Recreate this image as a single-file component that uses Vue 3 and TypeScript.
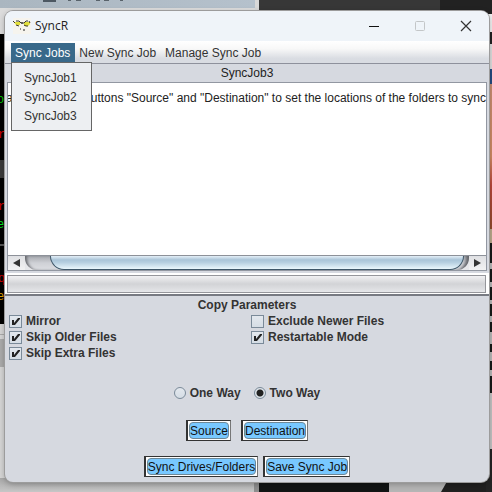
<script setup lang="ts">
import { ref } from 'vue'

interface Option {
  id: string
  label: string
  on: boolean
}

const jobs: string[] = ['SyncJob1', 'SyncJob2', 'SyncJob3']
const currentJob = ref<string>('SyncJob3')
const menuOpen = ref<boolean>(true)
const direction = ref<'one' | 'two'>('two')

const columns = ref<Option[][]>([
  [
    { id: 'mirror', label: 'Mirror', on: true },
    { id: 'older', label: 'Skip Older Files', on: true },
    { id: 'extra', label: 'Skip Extra Files', on: true },
  ],
  [
    { id: 'newer', label: 'Exclude Newer Files', on: false },
    { id: 'restart', label: 'Restartable Mode', on: true },
  ],
])

function pick(job: string): void {
  currentJob.value = job
  menuOpen.value = false
}
</script>

<template>
  <div class="desktop">
    <svg class="backdrop" viewBox="0 0 492 492" preserveAspectRatio="none" aria-hidden="true">
      <defs>
        <linearGradient id="strip" x1="0" x2="1">
          <stop offset="0" stop-color="#aab6c0" />
          <stop offset="1" stop-color="#b5c1cc" />
        </linearGradient>
        <linearGradient id="floor" x1="0" y1="0" x2="0" y2="1">
          <stop offset="0" stop-color="#a9a9a9" />
          <stop offset="1" stop-color="#c6c6c6" />
        </linearGradient>
        <linearGradient id="face" x1="0" y1="0" x2="0" y2="1">
          <stop offset="0" stop-color="#c98d72" />
          <stop offset="0.5" stop-color="#cf8a63" />
          <stop offset="0.7" stop-color="#b9463a" />
          <stop offset="1" stop-color="#8f4a2c" />
        </linearGradient>
      </defs>
      <rect width="492" height="492" fill="#d2d2d2" />
      <rect width="255" height="8" fill="url(#strip)" />
      <rect x="43" width="13" height="2" fill="#4d5862" />
      <path d="M68 0h3M76 0h5M96 0h4M104 0h5M120 0h3" stroke="#59636b" stroke-width="2" />
      <rect y="8" width="260" height="26" fill="#dcdcdc" />
      <rect x="255" width="4" height="12" fill="#d8d8d8" />
      <rect x="259" width="233" height="40" fill="#373737" />
      <rect x="440" width="52" height="40" fill="#222222" />
      <rect y="34" width="8" height="290" fill="#000000" />
      <rect y="160" width="8" height="18" fill="#3a3a3a" />
      <g font-family="Liberation Mono" font-size="12">
        <text x="-3" y="103" fill="#00c800">o</text>
        <text x="-2" y="138" fill="#d00000">r</text>
        <text x="-2" y="210" fill="#d00000">r</text>
        <text x="-3" y="228" fill="#00e020">e</text>
        <text x="-2" y="282" fill="#c00000">q</text>
        <text x="-3" y="300" fill="#e0a000">e</text>
      </g>
      <path d="M0 245h5" stroke="#555" stroke-width="2" />
      <rect y="324" width="8" height="168" fill="#d5d5d5" />
      <rect y="334" width="8" height="1" fill="#aaaaaa" />
      <rect y="339" width="8" height="28" fill="#aaaaaa" />
      <rect y="478" width="254" height="14" fill="url(#floor)" />
      <rect x="254" y="478" width="5" height="14" fill="#8e8e8e" />
      <rect x="259" y="478" width="130" height="14" fill="#121414" />
      <rect x="389" y="478" width="60" height="14" fill="#b5b5b5" />
      <path d="M449 478h43v14h-51z" fill="#202020" />
      <rect x="486" y="14" width="6" height="18" fill="#f0f0f0" />
      <rect x="486" y="32" width="6" height="12" fill="#222222" />
      <rect x="486" y="44" width="6" height="25" fill="#dddddd" />
      <rect x="486" y="69" width="6" height="15" fill="#244b80" />
      <rect x="486" y="84" width="6" height="145" fill="url(#face)" />
      <rect x="486" y="229" width="6" height="14" fill="#bba98c" />
      <rect x="486" y="243" width="6" height="150" fill="#171a19" />
      <path d="M491 263v6M491 282v5M491 300v4M491 316v6M491 332v12M491 352v9M491 370v6" stroke="#b8b8b8" stroke-width="2" />
      <rect x="486" y="393" width="6" height="56" fill="#c4c4c4" />
      <rect x="486" y="449" width="6" height="43" fill="#242424" />
    </svg>

    <main class="window">
      <header class="titlebar">
        <svg class="logo" width="18" height="16" viewBox="0 0 18 16" aria-hidden="true">
          <rect width="18" height="16" fill="#f6f4ee" />
          <path d="M1 4h6v3H3zM11 4h6v2l-2 2h-4z" fill="#e2df3c" />
          <path d="M0 3l2 2M3 3h3l2 2h3l2-2h2M16 3l1 2M3 7l3 1M11 7l2 1h2" fill="none" stroke="#3b3a28" />
          <path d="M8 5h2M7 11h1M10 12h2" stroke="#222" />
        </svg>
        <h1 class="title">SyncR</h1>
        <div class="captions">
          <button type="button" aria-label="Minimize">
            <svg width="12" height="12" viewBox="0 0 12 12"><path d="M1 6.500h10" stroke="#111" /></svg>
          </button>
          <button type="button" aria-label="Maximize" disabled>
            <svg width="12" height="12" viewBox="0 0 12 12"><rect x="1.500" y="1.500" width="9" height="9" rx="1" fill="none" stroke="#c3c6c8" /></svg>
          </button>
          <button type="button" aria-label="Close">
            <svg width="12" height="12" viewBox="0 0 12 12"><path d="M1 1l10 10M11 1L1 11" stroke="#333" stroke-width="1.200" /></svg>
          </button>
        </div>
      </header>

      <nav class="menubar">
        <div class="menu">
          <button type="button" class="item" :class="{ open: menuOpen }" :aria-expanded="menuOpen" @click="menuOpen = !menuOpen">Sync Jobs</button>
          <div v-if="menuOpen" class="popup">
            <button v-for="job in jobs" :key="job" type="button" @click="pick(job)">{{ job }}</button>
          </div>
        </div>
        <button type="button" class="item">New Sync Job</button>
        <button type="button" class="item">Manage Sync Job</button>
      </nav>

      <div class="job">{{ currentJob }}</div>

      <section class="log">
        <div class="view">
          <p>Please use these buttons "Source" and "Destination" to set the locations of the folders to sync</p>
        </div>
        <div class="scroll">
          <button type="button" class="arrow" aria-label="Scroll left">
            <svg width="7" height="8" viewBox="0 0 7 8"><path d="M0 4l7-4v8z" fill="#333" /></svg>
          </button>
          <div class="track"><div class="thumb"></div></div>
          <button type="button" class="arrow" aria-label="Scroll right">
            <svg width="7" height="8" viewBox="0 0 7 8"><path d="M7 4L0 0v8z" fill="#333" /></svg>
          </button>
        </div>
      </section>

      <div class="progress"><div class="fill"></div></div>

      <section class="params">
        <h2>Copy Parameters</h2>
        <div class="options">
          <div v-for="(column, i) in columns" :key="i" class="column">
            <label v-for="option in column" :key="option.id">
              <span class="box">
                <input v-model="option.on" type="checkbox" />
                <svg v-if="option.on" width="13" height="13" viewBox="0 0 13 13"><path d="M3 5h2v3l4-5h2v1l-5 6H3z" fill="#222" /></svg>
              </span>
              {{ option.label }}
            </label>
          </div>
        </div>
      </section>

      <div class="ways">
        <label><input v-model="direction" type="radio" name="direction" value="one" />One Way</label>
        <label><input v-model="direction" type="radio" name="direction" value="two" />Two Way</label>
      </div>

      <div class="actions">
        <button type="button"><span>Source</span></button>
        <button type="button"><span>Destination</span></button>
      </div>
      <div class="actions last">
        <button type="button"><span>Sync Drives/Folders</span></button>
        <button type="button"><span>Save Sync Job</span></button>
      </div>
    </main>
  </div>
</template>

<style>
body {
  margin: 0;
}
</style>

<style scoped>
* {
  box-sizing: border-box;
}
.desktop {
  position: relative;
  display: flex;
  min-height: 100vh;
  padding: 11px 3px 10px 5px;
  font: 12px/16px "Liberation Sans", Arial, sans-serif;
  color: #222;
  overflow: hidden;
}
.backdrop {
  position: absolute;
  inset: 0;
  width: 100%;
  height: 100%;
}
button {
  margin: 0;
  padding: 0;
  border: 0;
  background: none;
  font: inherit;
  color: inherit;
}
.window {
  position: relative;
  flex: 1;
  min-width: 0;
  display: flex;
  flex-direction: column;
  background: #d6d9e0;
  border-radius: 8px;
  box-shadow: 0 0 0 1px #9c9c9c, 0 2px 6px rgba(0, 0, 0, 0.3);
}
.titlebar {
  display: flex;
  align-items: center;
  height: 30px;
  padding-left: 8px;
  background: #eff4f9;
  border-radius: 8px 8px 0 0;
}
.title {
  margin: 0 0 0 4px;
  font: 12px/16px "Open Sans", "Noto Sans", sans-serif;
  color: #222;
}
.captions {
  display: flex;
  margin-left: auto;
}
.captions button {
  display: grid;
  place-items: center;
  width: 46px;
  height: 28px;
}
.menubar {
  display: flex;
  height: 23px;
  padding: 2px 6px 1px;
  background: linear-gradient(#ffffff, #f8f8f8 35%, #d9dce2 80%);
  border-bottom: 1px solid #8e919c;
}
.menu {
  position: relative;
}
.item {
  height: 19px;
  padding: 0 5px 0 4px;
  color: #333;
}
.item.open {
  background: #39698a;
  color: #fff;
}
.popup {
  position: absolute;
  z-index: 2;
  top: 19px;
  left: 0;
  display: flex;
  flex-direction: column;
  width: 81px;
  padding: 5px 0;
  background: #edeff2;
  border: 1px solid #666;
}
.popup button {
  height: 19px;
  padding-left: 12px;
  text-align: left;
  color: #333;
}
.job {
  height: 18px;
  line-height: 18px;
  text-align: center;
}
.log {
  margin: 0 2px;
  border: 1px solid #9297a1;
}
.view {
  display: flex;
  justify-content: flex-end;
  height: 172px;
  padding-top: 7px;
  background: #fff;
  overflow: hidden;
}
.view p {
  margin: 0;
  white-space: nowrap;
}
.scroll {
  display: flex;
  height: 15px;
  border-top: 1px solid #8d9199;
  background: #e6e7ea;
}
.arrow {
  display: grid;
  place-items: center;
  width: 17px;
  background: linear-gradient(#dfe0e3, #f2f2f3);
}
.track {
  flex: 1;
  padding: 0 5px 0 25px;
  border-radius: 0 0 12px 12px;
  background: linear-gradient(#a6a8ae, #cfd1d6 50%, #dddee2);
  box-shadow: inset 4px 0 3px -2px #66686d, inset -4px 0 3px -1px #66686d;
}
.thumb {
  height: 14px;
  border: 1px solid #3e5769;
  border-top: 0;
  border-radius: 0 0 14px 14px;
  background: linear-gradient(#e4eff7, #a9c4d8 30%, #b6cfe0 50%, #eaf7fd);
}
.progress {
  margin-top: 2px;
  height: 23px;
  padding: 2px 3px 1px 2px;
  background: #fff;
  border-bottom: 2px solid #777a82;
}
.fill {
  height: 100%;
  border: 1px solid #95969b;
  background: linear-gradient(#f1f1f3, #d2d3d6 50%, #e5e6e9);
}
.params {
  color: #333;
  font-weight: bold;
}
h2 {
  margin: 1px 0 0;
  font-size: 12px;
  line-height: 16px;
  text-align: center;
}
.options {
  display: grid;
  grid-template-columns: 1fr 1fr;
  padding-left: 4px;
  column-gap: 4px;
}
.column {
  display: flex;
  flex-direction: column;
}
label {
  display: flex;
  align-items: center;
  gap: 4px;
  height: 16px;
}
.box {
  display: grid;
}
.box > * {
  grid-area: 1 / 1;
}
.box svg {
  pointer-events: none;
}
input {
  appearance: none;
  margin: 0;
  width: 13px;
  height: 13px;
  border: 1px solid #7a8a99;
  background: linear-gradient(#e3e8ee, #d5dde5);
}
.ways {
  display: flex;
  justify-content: center;
  gap: 13px;
  margin-top: 24px;
  color: #333;
  font-weight: bold;
}
.ways input {
  width: 12px;
  height: 12px;
  border-radius: 50%;
}
.ways input:checked {
  background: radial-gradient(circle, #222 3px, #dfe5eb 4px);
}
.actions {
  display: flex;
  justify-content: center;
  gap: 10px;
  margin-top: 19px;
}
.actions button {
  height: 21px;
  padding: 1px;
  border: 1px solid #333;
  border-width: 1px 1px 1px 2px;
  border-right-color: #777;
  background: #fff;
  color: #111;
}
.actions span {
  display: block;
  height: 17px;
  line-height: 16px;
  border: 1px solid #6d8796;
  border-radius: 4px;
  background: #78c8ff;
}
.actions.last {
  gap: 5px;
  margin: 15px 0 5px;
}
</style>
